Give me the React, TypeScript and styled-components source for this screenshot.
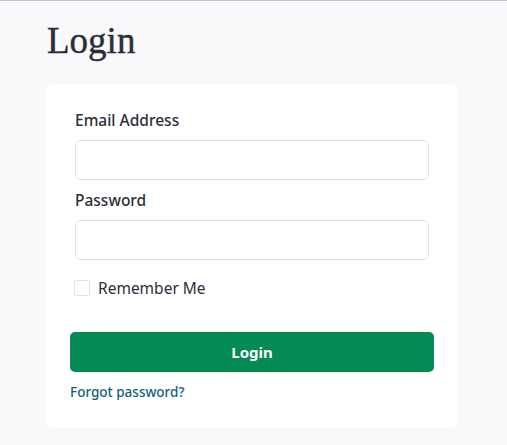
import styled, { createGlobalStyle } from 'styled-components';

const text = "#2e2d3a";
const border = "#e1e0e8";
const green = "#048a52";
const link = "#135f78";

const GlobalStyle = createGlobalStyle`
  html, body {
    margin: 0;
    padding: 0;
    background-color: #f9f9fb;
  }
  body {
    border-top: 1px solid #c9c8d2;
    font-family: "Noto Sans", "Open Sans", sans-serif;
    color: ${text};
  }
`;

const Page = styled.main`
  display: flex;
  flex-direction: column;
  padding: 0 50px 17px 46px;
`;

const Title = styled.h1`
  margin: 15px 0 0 1px;
  font-family: "Liberation Serif", serif;
  font-size: 37px;
  font-weight: 400;
  line-height: 50px;
  color: ${text};
  -webkit-text-stroke: 0.4px ${text};
`;

const Card = styled.form`
  display: flex;
  flex-direction: column;
  margin-top: 18px;
  padding: 24px 23px 27px 24px;
  background-color: #ffffff;
  border-radius: 6px;
`;

const Fields = styled.div`
  display: flex;
  flex-direction: column;
  padding: 0 5px;
`;

const Label = styled.label`
  font-size: 15.5px;
  font-weight: 500;
  line-height: 24px;
  margin-bottom: 8px;
`;

const Input = styled.input<{ $gap?: number }>`
  box-sizing: border-box;
  height: 40px;
  width: 100%;
  border: 1px solid ${border};
  border-radius: 6px;
  margin: 0 0 ${p => p.$gap ?? 0}px;
  background: #fff;
`;

const CheckRow = styled.label`
  display: flex;
  align-items: center;
  gap: 8px;
  margin: 20px 0 0 -1px;
  font-size: 15.5px;
  line-height: 16px;
`;

const Box = styled.span`
  box-sizing: border-box;
  width: 16px;
  height: 16px;
  border: 1.5px solid ${border};
  border-radius: 2px;
`;

const Button = styled.button`
  height: 40px;
  margin-top: 36px;
  border: none;
  border-radius: 5px;
  background-color: ${green};
  color: #fff;
  font-family: "Noto Sans", "Open Sans", sans-serif;
  font-size: 15px;
  font-weight: 700;
`;

const Link = styled.a`
  margin-top: 11px;
  font-size: 13.5px;
  font-weight: 500;
  line-height: 18px;
  color: ${link};
  text-decoration: none;
`;

function App() {
  return (
    <Page>
      <GlobalStyle />
      <Title>Login</Title>
      <Card>
        <Fields>
          <Label>Email Address</Label>
          <Input type="email" $gap={8} />
          <Label>Password</Label>
          <Input type="password" />
          <CheckRow>
            <Box />
            Remember Me
          </CheckRow>
        </Fields>
        <Button type="button">Login</Button>
        <Link href="#">Forgot password?</Link>
      </Card>
    </Page>
  );
}

export default App;
